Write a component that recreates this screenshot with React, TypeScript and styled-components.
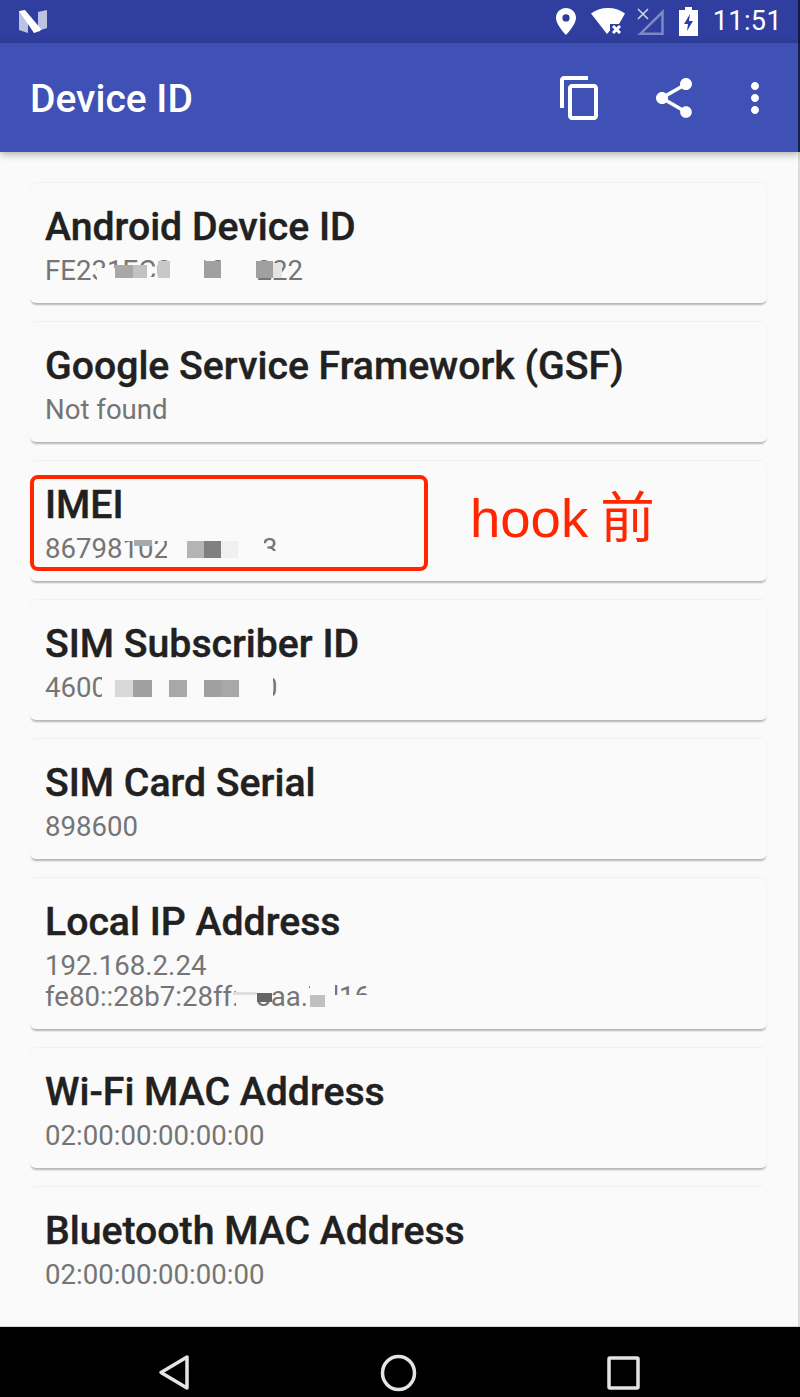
import React from 'react';
import styled, { createGlobalStyle } from 'styled-components';

const GlobalStyle = createGlobalStyle`
html, body {
  margin: 0;
  padding: 0;
  background: #fafafa;
}
`;

const Screen = styled.div`
position: relative;
width: 800px;
height: 1397px;
display: flex;
flex-direction: column;
overflow: hidden;
background: #fafafa;
font-family: Roboto, "Liberation Sans", sans-serif;

&::after {
  content: '';
  position: absolute;
  top: 0;
  right: 0;
  bottom: 0;
  z-index: 4;
  width: 2px;
  background: linear-gradient(to bottom, rgba(0, 0, 0, 0.6) 152px, rgba(0, 0, 0, 0.12) 152px);
}
`;

const StatusBar = styled.div`
height: 43px;
flex: none;
display: flex;
align-items: center;
background: #303f9f;
padding: 0 18px 0 19px;
`;

const StatusIcons = styled.div`
margin-left: auto;
display: flex;
align-items: center;
`;

const StatusSlot = styled.svg<{ $gap: number }>`
display: block;
margin-right: ${props => props.$gap}px;
`;

const Clock = styled.span`
font-size: 27px;
color: #fff;
line-height: 43px;
letter-spacing: 0.4px;
`;

const AppBar = styled.header`
height: 109px;
flex: none;
position: relative;
z-index: 2;
display: flex;
align-items: center;
background: #3f51b5;
padding: 0 21px 0 30px;
box-shadow: 0 2px 8px rgba(0, 0, 0, 0.32);
`;

const AppTitle = styled.h1`
margin: 3px 0 0;
font-size: 39px;
font-weight: 500;
color: #fff;
`;

const Actions = styled.div`
margin-left: auto;
display: flex;
align-items: center;
`;

const ActionIcon = styled.svg<{ $gap: number }>`
display: block;
width: 48px;
height: 48px;
fill: #fff;
margin-left: ${props => props.$gap}px;
`;

const CardList = styled.main`
flex: 1;
display: flex;
flex-direction: column;
gap: 19px;
padding: 31px 33px 0 30px;
`;

const Card = styled.section`
position: relative;
flex: none;
box-sizing: border-box;
padding: 23px 16px 17px 15px;
border-radius: 6px;
background: #fafafa;
box-shadow: 0 3px 2px -1px rgba(0, 0, 0, 0.28), 0 -1px 1px rgba(0, 0, 0, 0.04);

&:last-child {
  box-shadow: 0 -1px 1px rgba(0, 0, 0, 0.04);
}
`;

const CardTitle = styled.h2`
margin: 0 0 7px;
font-size: 39.2px;
font-weight: 500;
line-height: 42px;
color: #212121;
-webkit-text-stroke: 0.4px #212121;
`;

const CardValue = styled.p`
margin: 0;
font-size: 27.6px;
line-height: 31px;
color: #757575;
white-space: pre-line;
`;

const Patch = styled.i<{ $x: number; $y: number; $w: number; $h: number; $c: string }>`
position: absolute;
left: ${props => props.$x}px;
top: ${props => props.$y}px;
width: ${props => props.$w}px;
height: ${props => props.$h}px;
background: ${props => props.$c};
`;

const Highlight = styled.div`
position: absolute;
left: 0;
top: 14px;
box-sizing: border-box;
width: 398px;
height: 96px;
border: 4px solid #ff2600;
border-radius: 8px;
`;

const Note = styled.span`
position: absolute;
left: 440px;
top: 26px;
font-family: "Liberation Sans", "Noto Sans CJK SC", sans-serif;
font-size: 54.5px;
line-height: 64px;
word-spacing: -3px;
color: #ff2600;
white-space: nowrap;
`;

const NavBar = styled.nav`
position: relative;
z-index: 3;
height: 71px;
flex: none;
box-sizing: border-box;
background: #000;
border-top: 1px solid #d8d8d8;
overflow: hidden;
`;

const NavIcons = styled.svg`
display: block;
`;

type PatchData = [number, number, number, number, string];

const BG = '#fafafa';

const cards: { title: string; value: string; patches?: PatchData[]; marked?: boolean }[] = [
  {
    title: 'Android Device ID',
    value: 'FE231EC04.0000222',
    patches: [
      [67, 85, 18, 22, BG],
      [85, 94, 55, 13, BG],
      [140, 75, 34, 32, BG],
      [191, 75, 35, 32, BG],
      [174, 95, 52, 12, BG],
      [85, 82, 18, 13, '#a8a8a8'],
      [103, 82, 14, 13, '#c2c2c2'],
      [128, 78, 12, 17, '#c8c8c8'],
      [174, 78, 17, 17, '#a0a0a0'],
      [226, 78, 17, 17, '#a0a0a0'],
      [243, 80, 9, 15, '#e4e4e4'],
    ],
  },
  { title: 'Google Service Framework (GSF)', value: 'Not found' },
  {
    title: 'IMEI',
    value: '867981020000003',
    marked: true,
    patches: [
      [92, 72, 45, 8, BG],
      [137, 72, 97, 26, BG],
      [234, 90, 18, 9, BG],
      [104, 79, 18, 6, '#a8a8a8'],
      [157, 80, 17, 17, '#b4b4b4'],
      [174, 80, 17, 17, '#808080'],
      [191, 80, 17, 17, '#f0f0f0'],
    ],
  },
  {
    title: 'SIM Subscriber ID',
    value: '460000000000000',
    patches: [
      [72, 73, 171, 26, BG],
      [85, 80, 18, 17, '#d8d8d8'],
      [103, 80, 19, 17, '#a0a0a0'],
      [139, 80, 18, 17, '#a8a8a8'],
      [174, 80, 17, 17, '#a0a0a0'],
      [191, 80, 18, 17, '#a8a8a8'],
    ],
  },
  { title: 'SIM Card Serial', value: '898600' },
  {
    title: 'Local IP Address',
    value: '192.168.2.24\nfe80::28b7:28ff:f:5aa.7d16',
    patches: [
      [206, 104, 21, 27, BG],
      [203, 114, 24, 3, '#dedede'],
      [227, 104, 15, 11, BG],
      [227, 115, 15, 9, '#666666'],
      [280, 104, 25, 27, BG],
      [305, 117, 45, 14, BG],
      [280, 117, 15, 12, '#c0c0c0'],
    ],
  },
  { title: 'Wi-Fi MAC Address', value: '02:00:00:00:00:00' },
  { title: 'Bluetooth MAC Address', value: '02:00:00:00:00:00' },
];

export default function App() {
  return (
    <Screen>
      <GlobalStyle />
      <StatusBar>
        <svg width="29" height="24" viewBox="0 0 29 24">
          <path d="M0 1l9 3v19L0 20z" fill="#bcc2e2" />
          <path d="M28 0l-9 2v19l9-3z" fill="#bcc2e2" />
          <path d="M0 1L6 0l16 19-1 2-6 2z" fill="#fff" />
        </svg>
        <StatusIcons>
          <StatusSlot $gap={15} width="20" height="27" viewBox="0 0 20 27">
            <path fillRule="evenodd" fill="#fff" d="M10 0C4.5 0 0 4.4 0 9.8 0 17 10 27 10 27s10-10 10-17.2C20 4.4 15.500 0 10 0zm0 13.500a3.600 3.600 0 1 1 0-7.200 3.600 3.600 0 0 1 0 7.200z" />
          </StatusSlot>
          <StatusSlot $gap={12} width="34" height="27" viewBox="0 0 34 27">
            <path fill="#fff" d="M17 0C10 0 4.500 2 0 5.500L16 26l3-3.500V16h9l6-10.500C29.500 2 24 0 17 0z" />
            <path stroke="#fff" strokeWidth="3" d="M22 18l7 7M29 18l-7 7" />
          </StatusSlot>
          <StatusSlot $gap={15} width="27" height="27" viewBox="0 0 27 27">
            <path fill="none" stroke="#7d88c4" strokeWidth="2.500" d="M25.500 4v21.700H3.500z" />
            <path stroke="#d5d9ee" strokeWidth="1.500" d="M1 1l10 10M11 1L1 11" />
          </StatusSlot>
          <StatusSlot $gap={15} width="19" height="29" viewBox="0 0 19 29">
            <path fillRule="evenodd" fill="#fff" d="M6 0h7v3h6v26H0V3h6zM11 7l-6 10h4l-1 7 6-10h-4z" />
          </StatusSlot>
          <Clock>11:51</Clock>
        </StatusIcons>
      </StatusBar>
      <AppBar>
        <AppTitle>Device ID</AppTitle>
        <Actions>
          <ActionIcon $gap={0} viewBox="0 0 24 24">
            <path d="M16 1H4c-1.100 0-2 .9-2 2v14h2V3h12V1zm3 4H8c-1.100 0-2 .9-2 2v14c0 1.100.9 2 2 2h11c1.100 0 2-.9 2-2V7c0-1.100-.9-2-2-2zm0 16H8V7h11v14z" />
          </ActionIcon>
          <ActionIcon $gap={46} viewBox="0 0 24 24">
            <path d="M18 16.080c-.76 0-1.440.3-1.960.77L8.910 12.700c.05-.23.09-.46.09-.7s-.04-.47-.09-.7l7.050-4.110c.54.5 1.250.81 2.040.81 1.660 0 3-1.340 3-3s-1.340-3-3-3-3 1.340-3 3c0 .24.04.47.09.7L8.040 9.810C7.500 9.310 6.790 9 6 9c-1.660 0-3 1.340-3 3s1.340 3 3 3c.79 0 1.500-.31 2.040-.81l7.120 4.160c-.05.21-.08.43-.08.65 0 1.610 1.310 2.920 2.920 2.920 1.610 0 2.920-1.310 2.920-2.920s-1.310-2.920-2.920-2.920z" />
          </ActionIcon>
          <ActionIcon $gap={33} viewBox="0 0 24 24">
            <path d="M12 8c1.100 0 2-.9 2-2s-.9-2-2-2-2 .9-2 2 .9 2 2 2zm0 2c-1.100 0-2 .9-2 2s.9 2 2 2 2-.9 2-2-.9-2-2-2zm0 6c-1.100 0-2 .9-2 2s.9 2 2 2 2-.9 2-2-.9-2-2-2z" />
          </ActionIcon>
        </Actions>
      </AppBar>
      <CardList>
        {cards.map(card => (
          <Card key={card.title}>
            <CardTitle>{card.title}</CardTitle>
            <CardValue>{card.value}</CardValue>
            {card.patches?.map((p, i) => (
              <Patch key={i} $x={p[0]} $y={p[1]} $w={p[2]} $h={p[3]} $c={p[4]} />
            ))}
            {card.marked && (
              <>
                <Highlight />
                <Note>hook 前</Note>
              </>
            )}
          </Card>
        ))}
      </CardList>
      <NavBar>
        <NavIcons width="800" height="70" viewBox="0 1327 800 70">
          <path d="M187 1357v31l-26-15.500z" fill="none" stroke="#e4e4e4" strokeWidth="3.500" strokeLinejoin="round" />
          <ellipse cx="398.500" cy="1373" rx="16" ry="16.500" fill="none" stroke="#e4e4e4" strokeWidth="3.500" />
          <rect x="609" y="1358" width="29" height="30" rx="1" fill="none" stroke="#e4e4e4" strokeWidth="3.500" />
        </NavIcons>
      </NavBar>
    </Screen>
  );
}
